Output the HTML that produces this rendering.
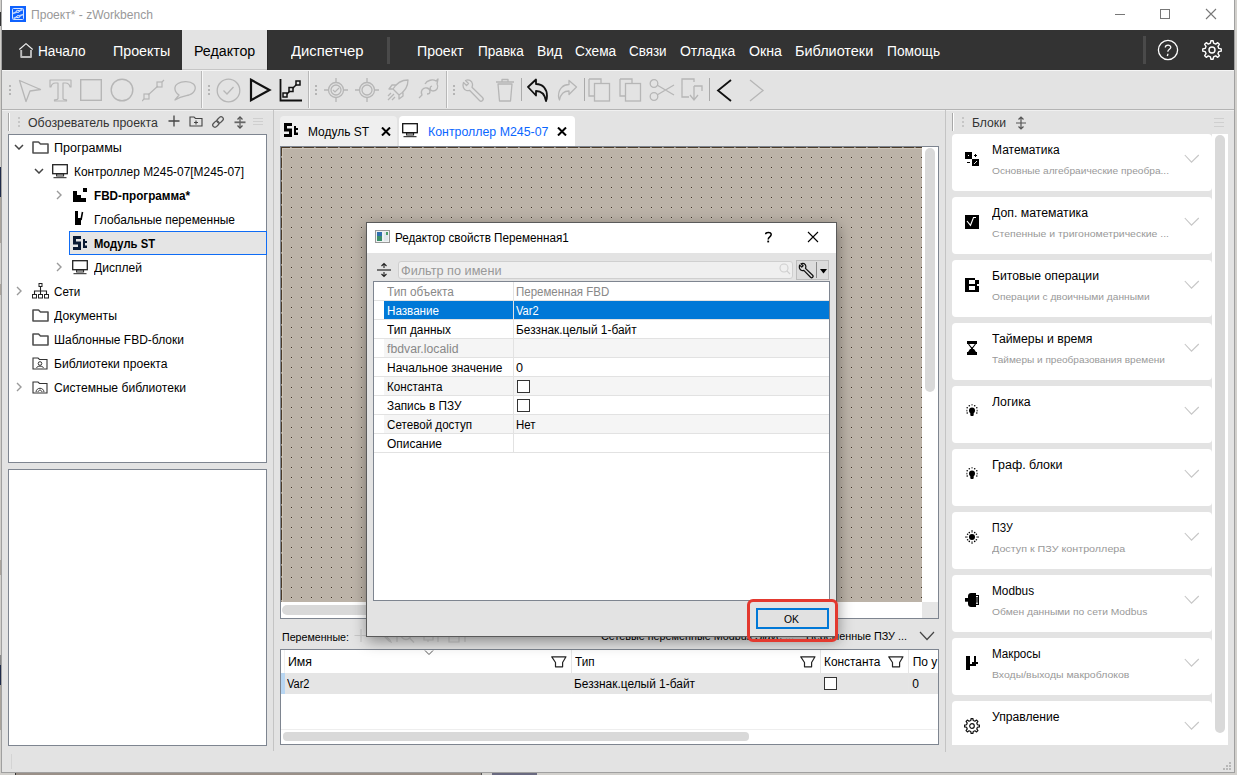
<!DOCTYPE html><html><head><meta charset="utf-8"><style>
html,body{margin:0;padding:0;width:1237px;height:775px;overflow:hidden;background:#b9b2a8}
body{position:relative;font-family:"Liberation Sans",sans-serif}
body div{position:absolute;box-sizing:border-box}
.t{white-space:nowrap}
</style></head><body>
<div style="left:0px;top:0px;width:1237px;height:775px;background:#d2d0cc"></div>
<div style="left:16px;top:773px;width:465px;height:2px;background:#9a9088"></div>
<div style="left:481px;top:773px;width:1px;height:2px;background:#555"></div>
<div style="left:492px;top:773px;width:45px;height:2px;background:#6a6a80"></div>
<div style="left:15px;top:773px;width:1px;height:2px;background:#333"></div>
<div style="left:0px;top:12px;width:1px;height:14px;background:#333"></div>
<div style="left:0px;top:167px;width:1px;height:30px;background:#1f2b4a"></div>
<div style="left:0px;top:197px;width:1px;height:46px;background:#aaa49c"></div>
<div style="left:0px;top:284px;width:1px;height:11px;background:#aaa49c"></div>
<div style="left:0px;top:560px;width:1px;height:15px;background:#aaa49c"></div>
<div style="left:0px;top:655px;width:1px;height:10px;background:#888"></div>
<div style="left:0px;top:665px;width:1px;height:20px;background:#1f2b4a"></div>
<div style="left:0px;top:685px;width:1px;height:45px;background:#aaa49c"></div>
<div style="left:1px;top:0px;width:1234px;height:773px;background:#a0a0a0"></div>
<div style="left:2px;top:0px;width:1232px;height:772px;background:#e3e3e3"></div>
<div style="left:2px;top:0px;width:1232px;height:30px;background:#fff"></div>
<svg style="position:absolute;left:10px;top:6px;" width="16" height="16" viewBox="0 0 16 16"><rect width="16" height="16" fill="#0f62fe"/><rect x="2.5" y="2.5" width="11" height="11" rx="1" fill="none" stroke="#d8e6ff" stroke-width="1"/><path d="M3 7.6 L12.6 3.4 M3.4 12.6 L13 8.4" stroke="#bcd4ff" stroke-width="1.6"/><ellipse cx="7.8" cy="5.3" rx="1.6" ry="1" fill="#0f62fe" stroke="#e8f0ff" stroke-width="1"/><ellipse cx="8.2" cy="10.7" rx="1.6" ry="1" fill="#0f62fe" stroke="#e8f0ff" stroke-width="1"/></svg>
<div class="t" style="left:31.16px;top:8.84px;font-size:12px;line-height:12px;color:#999999;font-weight:400;transform:scaleX(1.0054);transform-origin:0 0;">Проект* - zWorkbench</div>
<div style="left:1115px;top:14px;width:10px;height:1px;background:#777"></div>
<div style="left:1160px;top:9px;width:10px;height:10px;border:1px solid #777"></div>
<svg style="position:absolute;left:1205px;top:8px;" width="12" height="12" viewBox="0 0 12 12"><path d="M1 1 L11 11 M11 1 L1 11" stroke="#777" stroke-width="1.1"/></svg>
<div style="left:2px;top:30px;width:1232px;height:40px;background:#333333"></div>
<div style="left:182px;top:30px;width:85px;height:40px;background:#e3e3e3"></div>
<div style="left:182px;top:69px;width:85px;height:1px;background:#c6c6c6"></div>
<div style="left:267px;top:30px;width:1px;height:40px;background:#282828"></div>
<div style="left:2px;top:70px;width:1232px;height:1px;background:#f5f5f5"></div>
<svg style="position:absolute;left:18px;top:42px;" width="16" height="16" viewBox="0 0 16 16"><path d="M3.2 8 V15 H13 V8" fill="none" stroke="#bdbdbd" stroke-width="1.9" stroke-linejoin="round"/><path d="M1.6 7.2 L8 1.6 L14.4 7.2" fill="none" stroke="#eeeeee" stroke-width="1.2" stroke-linejoin="round" stroke-linecap="round"/></svg>
<div class="t" style="left:38.22px;top:44.35px;font-size:14px;line-height:14px;color:#ffffff;font-weight:400;transform:scaleX(0.9758);transform-origin:0 0;">Начало</div>
<div class="t" style="left:113.22px;top:44.35px;font-size:14px;line-height:14px;color:#ffffff;font-weight:400;transform:scaleX(1.0180);transform-origin:0 0;">Проекты</div>
<div class="t" style="left:290.52px;top:44.35px;font-size:14px;line-height:14px;color:#ffffff;font-weight:400;transform:scaleX(1.0586);transform-origin:0 0;">Диспетчер</div>
<div class="t" style="left:417.42px;top:44.35px;font-size:14px;line-height:14px;color:#ffffff;font-weight:400;transform:scaleX(1.0081);transform-origin:0 0;">Проект</div>
<div class="t" style="left:477.82px;top:44.35px;font-size:14px;line-height:14px;color:#ffffff;font-weight:400;transform:scaleX(0.9705);transform-origin:0 0;">Правка</div>
<div class="t" style="left:536.82px;top:44.35px;font-size:14px;line-height:14px;color:#ffffff;font-weight:400;transform:scaleX(0.9949);transform-origin:0 0;">Вид</div>
<div class="t" style="left:574.82px;top:44.35px;font-size:14px;line-height:14px;color:#ffffff;font-weight:400;transform:scaleX(0.9773);transform-origin:0 0;">Схема</div>
<div class="t" style="left:628.82px;top:44.35px;font-size:14px;line-height:14px;color:#ffffff;font-weight:400;transform:scaleX(0.9587);transform-origin:0 0;">Связи</div>
<div class="t" style="left:679.82px;top:44.35px;font-size:14px;line-height:14px;color:#ffffff;font-weight:400;transform:scaleX(0.9974);transform-origin:0 0;">Отладка</div>
<div class="t" style="left:748.82px;top:44.35px;font-size:14px;line-height:14px;color:#ffffff;font-weight:400;transform:scaleX(1.0139);transform-origin:0 0;">Окна</div>
<div class="t" style="left:794.82px;top:44.35px;font-size:14px;line-height:14px;color:#ffffff;font-weight:400;transform:scaleX(1.0309);transform-origin:0 0;">Библиотеки</div>
<div class="t" style="left:886.82px;top:44.35px;font-size:14px;line-height:14px;color:#ffffff;font-weight:400;transform:scaleX(0.9819);transform-origin:0 0;">Помощь</div>
<div class="t" style="left:194.22px;top:44.35px;font-size:14px;line-height:14px;color:#000000;font-weight:400;transform:scaleX(1.0155);transform-origin:0 0;">Редактор</div>
<div style="left:387px;top:37px;width:3px;height:27px;background:#4a4a4a"></div>
<div style="left:1143px;top:36px;width:3px;height:28px;background:#4a4a4a"></div>
<svg style="position:absolute;left:1157px;top:39px;" width="22" height="22" viewBox="0 0 22 22"><circle cx="11" cy="11" r="9.6" fill="none" stroke="#fff" stroke-width="1.3"/><path d="M8.3 8.5 C8.3 5.5 13.8 5.5 13.8 8.3 C13.8 10.3 10.8 10.3 10.8 12.8" fill="none" stroke="#fff" stroke-width="1.3"/><path d="M10.8 14.8 L10.8 15.8 L10.2 17" stroke="#fff" stroke-width="1.3"/></svg>
<svg style="position:absolute;left:1200px;top:38px;" width="24" height="24" viewBox="0 0 24 24"><path d="M18.82 10.42 L21.23 10.86 L21.23 13.14 L18.82 13.58 L17.94 15.70 L19.33 17.72 L17.72 19.33 L15.70 17.94 L13.58 18.82 L13.14 21.23 L10.86 21.23 L10.42 18.82 L8.30 17.94 L6.28 19.33 L4.67 17.72 L6.06 15.70 L5.18 13.58 L2.77 13.14 L2.77 10.86 L5.18 10.42 L6.06 8.30 L4.67 6.28 L6.28 4.67 L8.30 6.06 L10.42 5.18 L10.86 2.77 L13.14 2.77 L13.58 5.18 L15.70 6.06 L17.72 4.67 L19.33 6.28 L17.94 8.30Z" fill="none" stroke="#fff" stroke-width="1.4" stroke-linejoin="round"/><circle cx="12" cy="12" r="3.0" fill="none" stroke="#fff" stroke-width="1.4"/></svg>
<div style="left:2px;top:71px;width:1232px;height:38px;background:#e3e3e3"></div>
<div style="left:2px;top:109px;width:1232px;height:1px;background:#b4b4b4"></div>
<div style="left:2px;top:110px;width:1232px;height:1px;background:#f0f0f0"></div>
<div style="left:201px;top:71px;width:1px;height:37px;background:#b8b8b8"></div>
<div style="left:202px;top:71px;width:1px;height:37px;background:#f7f7f7"></div>
<div style="left:308px;top:71px;width:1px;height:37px;background:#b8b8b8"></div>
<div style="left:309px;top:71px;width:1px;height:37px;background:#f7f7f7"></div>
<div style="left:446px;top:71px;width:1px;height:37px;background:#b8b8b8"></div>
<div style="left:447px;top:71px;width:1px;height:37px;background:#f7f7f7"></div>
<div style="left:9px;top:85px;width:2px;height:2px;background:#b5b5b5"></div>
<div style="left:9px;top:89px;width:2px;height:2px;background:#b5b5b5"></div>
<div style="left:9px;top:93px;width:2px;height:2px;background:#b5b5b5"></div>
<div style="left:208px;top:85px;width:2px;height:2px;background:#b5b5b5"></div>
<div style="left:208px;top:89px;width:2px;height:2px;background:#b5b5b5"></div>
<div style="left:208px;top:93px;width:2px;height:2px;background:#b5b5b5"></div>
<div style="left:315px;top:85px;width:2px;height:2px;background:#b5b5b5"></div>
<div style="left:315px;top:89px;width:2px;height:2px;background:#b5b5b5"></div>
<div style="left:315px;top:93px;width:2px;height:2px;background:#b5b5b5"></div>
<div style="left:453px;top:85px;width:2px;height:2px;background:#b5b5b5"></div>
<div style="left:453px;top:89px;width:2px;height:2px;background:#b5b5b5"></div>
<div style="left:453px;top:93px;width:2px;height:2px;background:#b5b5b5"></div>
<svg style="position:absolute;left:18px;top:79px;" width="24" height="24" viewBox="0 0 24 24"><path d="M1.5 1.5 L22.5 10.5 L12 12 L8 22.5 Z" fill="none" stroke="#b6b6b6" stroke-width="1.3" stroke-linejoin="round"/></svg>
<svg style="position:absolute;left:49px;top:79px;" width="23" height="23" viewBox="0 0 23 23"><path d="M1 1 H22 V8 H21 C20.5 5 19 4 16.5 4 H14 V19.5 C14 20.3 14.8 20.8 17.5 20.8 V22 H5.5 V20.8 C8.2 20.8 9 20.3 9 19.5 V4 H6.5 C4 4 2.5 5 2 8 H1 Z" fill="none" stroke="#b6b6b6" stroke-width="1.2" stroke-linejoin="round"/></svg>
<svg style="position:absolute;left:80px;top:79px;" width="23" height="23" viewBox="0 0 23 23"><rect x="0.7" y="0.7" width="20.6" height="20.6" fill="none" stroke="#b6b6b6" stroke-width="1.4"/></svg>
<svg style="position:absolute;left:110px;top:78px;" width="24" height="24" viewBox="0 0 24 24"><circle cx="12" cy="12" r="10.8" fill="none" stroke="#b6b6b6" stroke-width="1.4"/></svg>
<svg style="position:absolute;left:142px;top:79px;" width="23" height="23" viewBox="0 0 23 23"><rect x="2" y="15" width="5" height="5" fill="none" stroke="#b6b6b6" stroke-width="1.2"/><rect x="15" y="3" width="5" height="5" fill="none" stroke="#b6b6b6" stroke-width="1.2"/><path d="M6 16 L16 7 M0 22 L2 20 M20 3 L22 1" stroke="#b6b6b6" stroke-width="1.2"/></svg>
<svg style="position:absolute;left:172px;top:80px;" width="25" height="21" viewBox="0 0 25 21"><path d="M3 20 L7 15 C2 12 1.5 6 6 3.5 C10 1 18 1 21.5 4 C25 7.5 23 13 17 15 C13 16 9 16 3 20 Z" fill="none" stroke="#b6b6b6" stroke-width="1.3" stroke-linejoin="round"/></svg>
<svg style="position:absolute;left:216px;top:78px;" width="25" height="25" viewBox="0 0 25 25"><circle cx="12.5" cy="12.5" r="11.3" fill="none" stroke="#b6b6b6" stroke-width="1.3"/><path d="M7.5 12.5 L11 16 L17.5 9" fill="none" stroke="#b6b6b6" stroke-width="1.3"/></svg>
<svg style="position:absolute;left:249px;top:78px;" width="23" height="24" viewBox="0 0 23 24"><path d="M2 1.8 L20.5 12 L2 22.2 Z" fill="none" stroke="#111" stroke-width="2.2" stroke-linejoin="miter"/></svg>
<svg style="position:absolute;left:279px;top:79px;" width="24" height="23" viewBox="0 0 24 23"><path d="M1.5 0 V21.5 H23" fill="none" stroke="#111" stroke-width="1.8"/><path d="M6 17 L18 5" stroke="#111" stroke-width="1.5"/><rect x="4" y="14" width="4" height="4" fill="#e3e3e3" stroke="#111" stroke-width="1.5"/><rect x="10" y="8.5" width="4" height="4" fill="#e3e3e3" stroke="#111" stroke-width="1.5"/><rect x="17" y="2" width="4" height="4" fill="#e3e3e3" stroke="#111" stroke-width="1.5"/></svg>
<svg style="position:absolute;left:324px;top:78px;" width="24" height="24" viewBox="0 0 24 24"><circle cx="12" cy="12" r="7.5" fill="none" stroke="#b6b6b6" stroke-width="1.3"/><circle cx="12" cy="12" r="5" fill="none" stroke="#b6b6b6" stroke-width="1.3"/><path d="M12 0 V4 M12 20 V24 M0 12 H4 M20 12 H24" stroke="#b6b6b6" stroke-width="1.3"/><path d="M9 12 L11 14 L15 10" fill="none" stroke="#b6b6b6" stroke-width="1.2"/></svg>
<svg style="position:absolute;left:355px;top:78px;" width="24" height="24" viewBox="0 0 24 24"><circle cx="12" cy="12" r="7.5" fill="none" stroke="#b6b6b6" stroke-width="1.3"/><circle cx="12" cy="12" r="5" fill="none" stroke="#b6b6b6" stroke-width="1.3"/><path d="M12 0 V4 M12 20 V24 M0 12 H4 M20 12 H24" stroke="#b6b6b6" stroke-width="1.3"/></svg>
<svg style="position:absolute;left:386px;top:78px;" width="24" height="24" viewBox="0 0 24 24"><path d="M22 2 C15 2 10 6 7 11 L13 17 C18 14 22 9 22 2 Z M7 11 L3 11 L6 7 L11 7 M13 17 L13 21 L17 18 L17 13 M8 16 L2 22 M5 15 L2 18 M9 19 L6 22" fill="none" stroke="#b6b6b6" stroke-width="1.3" stroke-linejoin="round"/></svg>
<svg style="position:absolute;left:417px;top:78px;" width="23" height="24" viewBox="0 0 23 24"><path d="M2 20 L5 17 C3 13 6 9 10 10 C14 11 14 16 10 16 M8 6 C10 2 16 1 19 3 L21 1 L20 6 C22 9 20 13 16 13 C13 13 12 9 15 8" fill="none" stroke="#b6b6b6" stroke-width="1.3" stroke-linejoin="round"/></svg>
<svg style="position:absolute;left:461px;top:78px;" width="25" height="25" viewBox="0 0 25 25"><path d="M2.5 4.5 L5.5 7.5 L7.5 5.5 L4.5 2.5 C7.5 1 11 2.5 11.5 6 C11.7 7.5 11.3 8.5 11 9.3 L21.5 19.5 C22.5 20.5 22.5 21.5 21.5 22.5 C20.5 23.5 19.5 23.5 18.5 22.5 L8.5 12.3 C7.5 12.7 6.5 12.8 5.5 12.5 C2.5 11.5 1.2 8 2.5 4.5 Z" fill="none" stroke="#b6b6b6" stroke-width="1.3" stroke-linejoin="round"/></svg>
<svg style="position:absolute;left:495px;top:78px;" width="20" height="24" viewBox="0 0 20 24"><path d="M1 4 H19 M7 4 V1.5 H13 V4 M3 6 L4.5 23 H15.5 L17 6 Z" fill="none" stroke="#b6b6b6" stroke-width="1.3" stroke-linejoin="round"/></svg>
<div style="left:521px;top:78px;width:1px;height:23px;background:#aaa"></div>
<svg style="position:absolute;left:526px;top:78px;" width="23" height="24" viewBox="0 0 23 24"><path d="M2 9 L10 1.5 L10 6 C17 6 21 11 21 18 C21 20 20.5 22 20 23 C19 17 16 13 10 13 L10 17.5 Z" fill="none" stroke="#111" stroke-width="1.8" stroke-linejoin="round"/></svg>
<svg style="position:absolute;left:557px;top:79px;" width="21" height="22" viewBox="0 0 21 22"><path d="M19.5 8 L12 1.5 L12 5.5 C6 5.5 1.5 10 1.5 17 C1.5 18.5 2 20 2.5 21 C3.5 15.5 6.5 12 12 12 L12 15.5 Z" fill="none" stroke="#b6b6b6" stroke-width="1.3" stroke-linejoin="round"/></svg>
<div style="left:584px;top:78px;width:1px;height:23px;background:#aaa"></div>
<svg style="position:absolute;left:588px;top:78px;" width="23" height="24" viewBox="0 0 23 24"><path d="M1 1 H13 V5 M1 1 V18 H6" fill="none" stroke="#b6b6b6" stroke-width="1.3"/><rect x="6.5" y="5.5" width="15" height="17.5" fill="none" stroke="#b6b6b6" stroke-width="1.3"/></svg>
<svg style="position:absolute;left:619px;top:78px;" width="23" height="24" viewBox="0 0 23 24"><path d="M1 1 H13 V5 M1 1 V18 H6" fill="none" stroke="#b6b6b6" stroke-width="1.3"/><rect x="6.5" y="5.5" width="15" height="17.5" fill="none" stroke="#b6b6b6" stroke-width="1.3"/></svg>
<svg style="position:absolute;left:649px;top:78px;" width="26" height="24" viewBox="0 0 26 24"><circle cx="5" cy="5.5" r="3.8" fill="none" stroke="#b6b6b6" stroke-width="1.3"/><circle cx="5" cy="18.5" r="3.8" fill="none" stroke="#b6b6b6" stroke-width="1.3"/><path d="M8 7 L25 17 M8 17 L25 7" stroke="#b6b6b6" stroke-width="1.3"/></svg>
<svg style="position:absolute;left:681px;top:78px;" width="23" height="25" viewBox="0 0 23 25"><path d="M13 4 V1 H1 V19 H8 M13 8 V21 M9 17 L13 22 L17 17 M13 8 H21 V13" fill="none" stroke="#b6b6b6" stroke-width="1.3"/></svg>
<div style="left:709px;top:78px;width:1px;height:23px;background:#aaa"></div>
<svg style="position:absolute;left:716px;top:79px;" width="17" height="23" viewBox="0 0 17 23"><path d="M15 1 L2 11.5 L15 22" fill="none" stroke="#111" stroke-width="1.8"/></svg>
<svg style="position:absolute;left:748px;top:79px;" width="17" height="23" viewBox="0 0 17 23"><path d="M2 1 L15 11.5 L2 22" fill="none" stroke="#b6b6b6" stroke-width="1.3"/></svg>
<div style="left:8px;top:113px;width:1px;height:18px;background:#a8a8a8"></div>
<div style="left:8px;top:113px;width:2px;height:1px;background:#a8a8a8"></div>
<div style="left:9px;top:113px;width:1px;height:18px;background:#fff"></div>
<div style="left:18px;top:117px;width:2px;height:2px;background:#c6c6c6"></div>
<div style="left:18px;top:121px;width:2px;height:2px;background:#c6c6c6"></div>
<div style="left:18px;top:125px;width:2px;height:2px;background:#c6c6c6"></div>
<div class="t" style="left:28.46px;top:117.34px;font-size:12px;line-height:12px;color:#333333;font-weight:400;transform:scaleX(1.0283);transform-origin:0 0;">Обозреватель проекта</div>
<svg style="position:absolute;left:167px;top:114px;" width="14" height="14" viewBox="0 0 14 14"><path d="M7 1.5 V12.5 M1.5 7 H12.5" stroke="#444" stroke-width="1.3"/></svg>
<svg style="position:absolute;left:189px;top:115px;" width="14" height="12" viewBox="0 0 14 12"><path d="M1 2 H5 L6.5 3.5 H13 V11 H1 Z" fill="none" stroke="#444" stroke-width="1.1"/><path d="M7 5.5 V9.5 M5 7.5 H9" stroke="#444" stroke-width="1.1"/></svg>
<svg style="position:absolute;left:211px;top:115px;" width="14" height="14" viewBox="0 0 14 14"><g transform="rotate(-45 7 7)"><rect x="0.5" y="4.8" width="7" height="4.4" rx="2.2" fill="none" stroke="#555" stroke-width="1.3"/><rect x="6.5" y="4.8" width="7" height="4.4" rx="2.2" fill="none" stroke="#555" stroke-width="1.3"/></g></svg>
<svg style="position:absolute;left:234px;top:116px;" width="12" height="13" viewBox="0 0 12 13"><path d="M6 1 V12" stroke="#555" stroke-width="1.2"/><path d="M0.5 6.3 H11.5" stroke="#666" stroke-width="1.8"/><path d="M3.5 3.5 L6 1 L8.5 3.5 M3.5 9.5 L6 12 L8.5 9.5" fill="none" stroke="#555" stroke-width="1.3"/></svg>
<div style="left:253px;top:118px;width:10px;height:1px;background:#cfcfcf"></div>
<div style="left:253px;top:121px;width:10px;height:1px;background:#cfcfcf"></div>
<div style="left:253px;top:124px;width:10px;height:1px;background:#cfcfcf"></div>
<div style="left:8px;top:134px;width:259px;height:329px;background:#fff;border:1px solid #7e8590"></div>
<div style="left:8px;top:469px;width:259px;height:277px;background:#fff;border:1px solid #7e8590"></div>
<div style="left:273px;top:110px;width:1px;height:641px;background:#c4c4c4"></div>
<div style="left:945px;top:110px;width:1px;height:642px;background:#c4c4c4"></div>
<div style="left:11px;top:754px;width:1px;height:15px;background:#d4d4d4"></div>
<svg style="position:absolute;left:14px;top:144px;" width="10" height="6" viewBox="0 0 10 6"><path d="M1 1 L5 5 L9 1" fill="none" stroke="#444" stroke-width="1.5"/></svg>
<svg style="position:absolute;left:32px;top:141px;" width="17" height="13" viewBox="0 0 17 13"><path d="M1 1 H6.5 L8.5 3 H16 V12 H1 Z" fill="none" stroke="#505050" stroke-width="1.6" stroke-linejoin="round"/></svg>
<div class="t" style="left:53.66px;top:142.14px;font-size:12px;line-height:12px;color:#000;font-weight:400;transform:scaleX(1.0458);transform-origin:0 0;">Программы</div>
<svg style="position:absolute;left:34px;top:168px;" width="10" height="6" viewBox="0 0 10 6"><path d="M1 1 L5 5 L9 1" fill="none" stroke="#444" stroke-width="1.5"/></svg>
<svg style="position:absolute;left:52px;top:164px;" width="17" height="15" viewBox="0 0 17 15"><rect x="0.7" y="0.7" width="14.6" height="9" fill="none" stroke="#222" stroke-width="1.3"/><rect x="4.6" y="10" width="7" height="2" fill="none" stroke="#222" stroke-width="1"/><path d="M1.5 13.7 H14.5" stroke="#222" stroke-width="1"/></svg>
<div class="t" style="left:73.56px;top:166.14px;font-size:12px;line-height:12px;color:#000;font-weight:400;transform:scaleX(0.9944);transform-origin:0 0;">Контроллер М245-07[М245-07]</div>
<svg style="position:absolute;left:56px;top:190px;" width="6" height="10" viewBox="0 0 6 10"><path d="M1 1 L5 5 L1 9" fill="none" stroke="#9a9a9a" stroke-width="1.4"/></svg>
<svg style="position:absolute;left:73px;top:188px;" width="14" height="14" viewBox="0 0 14 14"><path d="M0 3 H4 V7 H8 V10 H13 V14 H0 Z" fill="#000"/><rect x="10" y="0" width="4" height="4" fill="#000"/></svg>
<div class="t" style="left:93.66px;top:190.14px;font-size:12px;line-height:12px;color:#000;font-weight:700;transform:scaleX(0.9745);transform-origin:0 0;">FBD-программа*</div>
<svg style="position:absolute;left:74px;top:211px;" width="13" height="15" viewBox="0 0 13 15"><path d="M1 0 H4 V7 H7 V14 H1 Z" fill="#000"/><path d="M8.5 1 L7 9" stroke="#000" stroke-width="1.6"/></svg>
<div class="t" style="left:93.66px;top:214.14px;font-size:12px;line-height:12px;color:#000;font-weight:400;transform:scaleX(0.9970);transform-origin:0 0;">Глобальные переменные</div>
<div style="left:69px;top:231px;width:198px;height:24px;background:#e5e5e5;border:1px solid #0f6cf5"></div>
<svg style="position:absolute;left:73px;top:236px;" width="15" height="14" viewBox="0 0 15 14"><path d="M0 0 H8 V3 H3 V5.5 H8 V14 H0 V11 H5 V8.5 H0 Z" fill="#0a1a33"/><path d="M10 3 H12 V5 H14 V7 H12 V9.5 H14 V12 H10 Z" fill="#0a1a33"/></svg>
<div class="t" style="left:93.66px;top:238.14px;font-size:12px;line-height:12px;color:#000;font-weight:700;transform:scaleX(0.9367);transform-origin:0 0;">Модуль ST</div>
<svg style="position:absolute;left:56px;top:262px;" width="6" height="10" viewBox="0 0 6 10"><path d="M1 1 L5 5 L1 9" fill="none" stroke="#9a9a9a" stroke-width="1.4"/></svg>
<svg style="position:absolute;left:72px;top:260px;" width="17" height="15" viewBox="0 0 17 15"><rect x="0.7" y="0.7" width="14.6" height="9" fill="none" stroke="#222" stroke-width="1.3"/><rect x="4.6" y="10" width="7" height="2" fill="none" stroke="#222" stroke-width="1"/><path d="M1.5 13.7 H14.5" stroke="#222" stroke-width="1"/></svg>
<div class="t" style="left:93.66px;top:262.14px;font-size:12px;line-height:12px;color:#000;font-weight:400;transform:scaleX(1.0059);transform-origin:0 0;">Дисплей</div>
<svg style="position:absolute;left:16px;top:286px;" width="6" height="10" viewBox="0 0 6 10"><path d="M1 1 L5 5 L1 9" fill="none" stroke="#9a9a9a" stroke-width="1.4"/></svg>
<svg style="position:absolute;left:32px;top:283px;" width="17" height="16" viewBox="0 0 17 16"><path d="M8.5 3 V8 M2.5 11 V8 H14.5 V11 M8.5 8 V11" fill="none" stroke="#222" stroke-width="1.1"/><rect x="7" y="0.5" width="3" height="3" fill="none" stroke="#222" stroke-width="1"/><rect x="0.5" y="11.5" width="4" height="3.5" fill="none" stroke="#222" stroke-width="1"/><rect x="6.5" y="11.5" width="4" height="3.5" fill="none" stroke="#222" stroke-width="1"/><rect x="12.5" y="11.5" width="4" height="3.5" fill="none" stroke="#222" stroke-width="1"/></svg>
<div class="t" style="left:53.66px;top:286.14px;font-size:12px;line-height:12px;color:#000;font-weight:400;transform:scaleX(0.9690);transform-origin:0 0;">Сети</div>
<svg style="position:absolute;left:32px;top:309px;" width="17" height="13" viewBox="0 0 17 13"><path d="M1 1 H6.5 L8.5 3 H16 V12 H1 Z" fill="none" stroke="#505050" stroke-width="1.6" stroke-linejoin="round"/></svg>
<div class="t" style="left:53.66px;top:310.14px;font-size:12px;line-height:12px;color:#000;font-weight:400;transform:scaleX(1.0184);transform-origin:0 0;">Документы</div>
<svg style="position:absolute;left:32px;top:333px;" width="17" height="13" viewBox="0 0 17 13"><path d="M1 1 H6.5 L8.5 3 H16 V12 H1 Z" fill="none" stroke="#505050" stroke-width="1.6" stroke-linejoin="round"/></svg>
<div class="t" style="left:53.66px;top:334.14px;font-size:12px;line-height:12px;color:#000;font-weight:400;transform:scaleX(1.0016);transform-origin:0 0;">Шаблонные FBD-блоки</div>
<svg style="position:absolute;left:32px;top:357px;" width="16" height="13" viewBox="0 0 16 13"><path d="M1 1 H6 L7.5 2.5 H15 V12 H1 Z" fill="none" stroke="#333" stroke-width="1.1"/><circle cx="8" cy="6.5" r="1.8" fill="none" stroke="#333" stroke-width="1"/><path d="M4.5 11 C5 8.5 11 8.5 11.5 11" fill="none" stroke="#333" stroke-width="1"/></svg>
<div class="t" style="left:53.66px;top:358.14px;font-size:12px;line-height:12px;color:#000;font-weight:400;transform:scaleX(1.0107);transform-origin:0 0;">Библиотеки проекта</div>
<svg style="position:absolute;left:16px;top:382px;" width="6" height="10" viewBox="0 0 6 10"><path d="M1 1 L5 5 L1 9" fill="none" stroke="#9a9a9a" stroke-width="1.4"/></svg>
<svg style="position:absolute;left:32px;top:381px;" width="16" height="13" viewBox="0 0 16 13"><path d="M1 1 H6 L7.5 2.5 H15 V12 H1 Z" fill="none" stroke="#333" stroke-width="1.1"/><path d="M4 11 C4.5 6 11.5 6 12 11 M6 11 C6.5 8.5 9.5 8.5 10 11" fill="none" stroke="#333" stroke-width="1"/></svg>
<div class="t" style="left:53.66px;top:382.14px;font-size:12px;line-height:12px;color:#000;font-weight:400;transform:scaleX(1.0081);transform-origin:0 0;">Системные библиотеки</div>
<div style="left:280px;top:116px;width:117px;height:30px;background:#efefef;border-radius:4px 4px 0 0"></div>
<div style="left:399px;top:116px;width:176px;height:30px;background:#ffffff;border-radius:4px 4px 0 0"></div>
<svg style="position:absolute;left:284px;top:123px;" width="15" height="14" viewBox="0 0 15 14"><path d="M0 0 H8 V3 H3 V5.5 H8 V14 H0 V11 H5 V8.5 H0 Z" fill="#000"/><path d="M10 3 H12 V5 H14 V7 H12 V9.5 H14 V12 H10 Z" fill="#000"/></svg>
<div class="t" style="left:308.46px;top:125.84px;font-size:12px;line-height:12px;color:#000;font-weight:400;transform:scaleX(0.9967);transform-origin:0 0;">Модуль ST</div>
<svg style="position:absolute;left:381px;top:127px;" width="10" height="9" viewBox="0 0 10 9"><path d="M1 0.5 L9 8.5 M9 0.5 L1 8.5" stroke="#000" stroke-width="2"/></svg>
<svg style="position:absolute;left:402px;top:123px;" width="17" height="15" viewBox="0 0 17 15"><rect x="0.7" y="0.7" width="14.6" height="9" fill="none" stroke="#111" stroke-width="1.3"/><rect x="4.6" y="10" width="7" height="2" fill="none" stroke="#111" stroke-width="1"/><path d="M1.5 13.7 H14.5" stroke="#111" stroke-width="1"/></svg>
<div class="t" style="left:428.16px;top:125.84px;font-size:12px;line-height:12px;color:#0a66ff;font-weight:400;transform:scaleX(1.0306);transform-origin:0 0;">Контроллер М245-07</div>
<svg style="position:absolute;left:557px;top:127px;" width="10" height="9" viewBox="0 0 10 9"><path d="M1 0.5 L9 8.5 M9 0.5 L1 8.5" stroke="#000" stroke-width="2"/></svg>
<div style="left:280px;top:146px;width:659px;height:473px;background:#fff;border:1px solid #7e8590"></div>
<div style="left:281px;top:147px;width:641px;height:455px;background:#bcb3a8"></div>
<svg style="position:absolute;left:281px;top:147px;" width="641" height="455" viewBox="0 0 641 455"><defs><pattern id="dp" x="0" y="0" width="10" height="10" patternUnits="userSpaceOnUse"><rect x="0" y="0" width="1" height="1" fill="#3d3020"/><rect x="-1" y="0" width="1" height="1" fill="#cdc5ba" opacity="0.5"/><rect x="1" y="0" width="1" height="1" fill="#cdc5ba" opacity="0.5"/><rect x="0" y="-1" width="1" height="1" fill="#cdc5ba" opacity="0.5"/><rect x="0" y="1" width="1" height="1" fill="#cdc5ba" opacity="0.5"/></pattern></defs><rect x="10" y="10" width="641" height="455" fill="url(#dp)" transform="translate(0,0)"/><rect x="1" y="1" width="640" height="1" fill="#cec6ba"/><rect x="1" y="1" width="1" height="454" fill="#cec6ba"/><path d="M0 0.5 H641" stroke="#4a3a28" stroke-width="1" stroke-dasharray="10.6 1.4" stroke-dashoffset="1.4"/><path d="M0.5 0 V455" stroke="#4a3a28" stroke-width="1" stroke-dasharray="10.6 1.4" stroke-dashoffset="1.4"/></svg>
<div style="left:925px;top:148px;width:10px;height:244px;background:#d9d9d9;border-radius:5px"></div>
<div style="left:282px;top:605px;width:420px;height:10px;background:#d9d9d9;border-radius:5px"></div>
<div style="left:922px;top:602px;width:16px;height:16px;background:#e6e6e6"></div>
<div class="t" style="left:281.73px;top:631.69px;font-size:11px;line-height:11px;color:#000;font-weight:400;transform:scaleX(0.9686);transform-origin:0 0;">Переменные:</div>
<svg style="position:absolute;left:354px;top:628px;" width="14" height="15" viewBox="0 0 14 15"><path d="M7 1 V14 M0.5 7.5 H13.5" stroke="#c8c8c8" stroke-width="1.2"/></svg>
<svg style="position:absolute;left:377px;top:628px;" width="15" height="15" viewBox="0 0 15 15"><path d="M2 3 L12 13 L14 14 L13 12 L3 2 Z M1 1 L3 3" fill="none" stroke="#c8c8c8" stroke-width="1.2"/></svg>
<svg style="position:absolute;left:396px;top:628px;" width="21" height="15" viewBox="0 0 21 15"><path d="M1 1 V14" stroke="#c8c8c8" stroke-width="1.2"/><circle cx="10" cy="6.5" r="5" fill="none" stroke="#c8c8c8" stroke-width="1.3"/><path d="M13.5 10 L18 14.5" stroke="#c8c8c8" stroke-width="1.3"/></svg>
<svg style="position:absolute;left:423px;top:628px;" width="22" height="15" viewBox="0 0 22 15"><path d="M1 3 H10 V12 H1 Z M5 12 V14 M10 7 H20 M15 3 V14" fill="none" stroke="#c8c8c8" stroke-width="1.2"/></svg>
<svg style="position:absolute;left:448px;top:628px;" width="22" height="15" viewBox="0 0 22 15"><path d="M1 3 H11 V14 H1 Z M17 1 V14 M13 1 H21" fill="none" stroke="#c8c8c8" stroke-width="1.2"/></svg>
<div class="t" style="left:600.93px;top:631.19px;font-size:11px;line-height:11px;color:#000;font-weight:400;transform:scaleX(0.9806);transform-origin:0 0;">Сетевые переменные Modbus Slave ...</div>
<div class="t" style="left:806.23px;top:631.19px;font-size:11px;line-height:11px;color:#000;font-weight:400;transform:scaleX(0.9824);transform-origin:0 0;">Переменные ПЗУ ...</div>
<svg style="position:absolute;left:919px;top:631px;" width="16" height="10" viewBox="0 0 16 10"><path d="M1 1 L8 8.5 L15 1" fill="none" stroke="#444" stroke-width="1.2"/></svg>
<div style="left:280px;top:649px;width:659px;height:96px;background:#fff;border:1px solid #7e8590"></div>
<div style="left:281px;top:673px;width:657px;height:21px;background:#e5e5e5"></div>
<div style="left:281px;top:673px;width:4px;height:21px;background:#b8d6f2"></div>
<div style="left:284px;top:650px;width:1px;height:23px;background:#f0f0f0"></div>
<div style="left:281px;top:729px;width:657px;height:15px;background:#fff"></div>
<div style="left:281px;top:729px;width:657px;height:1px;background:#eeeeee"></div>
<div style="left:283px;top:732px;width:466px;height:9px;background:#d9d9d9;border-radius:4px"></div>
<div style="left:571px;top:650px;width:1px;height:44px;background:#e6e6e6"></div>
<div style="left:820px;top:650px;width:1px;height:44px;background:#e6e6e6"></div>
<div style="left:908px;top:650px;width:1px;height:44px;background:#e6e6e6"></div>
<div class="t" style="left:288.16px;top:655.84px;font-size:12px;line-height:12px;color:#000;font-weight:400;transform:scaleX(1.0267);transform-origin:0 0;">Имя</div>
<div class="t" style="left:287.16px;top:677.84px;font-size:12px;line-height:12px;color:#000;font-weight:400;transform:scaleX(0.9195);transform-origin:0 0;">Var2</div>
<div class="t" style="left:574.96px;top:655.84px;font-size:12px;line-height:12px;color:#000;font-weight:400;transform:scaleX(0.9742);transform-origin:0 0;">Тип</div>
<div class="t" style="left:573.96px;top:677.84px;font-size:12px;line-height:12px;color:#000;font-weight:400;transform:scaleX(0.9929);transform-origin:0 0;">Беззнак.целый 1-байт</div>
<div class="t" style="left:824.16px;top:655.84px;font-size:12px;line-height:12px;color:#000;font-weight:400;transform:scaleX(0.9912);transform-origin:0 0;">Константа</div>
<div class="t" style="left:912.66px;top:655.84px;font-size:12px;line-height:12px;color:#000;font-weight:400;">По у</div>
<div class="t" style="left:912.16px;top:677.84px;font-size:12px;line-height:12px;color:#000;font-weight:400;">0</div>
<div style="left:824px;top:677px;width:13px;height:13px;background:#fff;border:1px solid #333"></div>
<svg style="position:absolute;left:551px;top:656px;" width="16" height="12" viewBox="0 0 16 12"><path d="M0.8 0.8 H15 L11.6 6.5 V10.8 H4.5 V6.5 Z" fill="none" stroke="#222" stroke-width="1.2" stroke-linejoin="round"/></svg>
<svg style="position:absolute;left:800px;top:656px;" width="16" height="12" viewBox="0 0 16 12"><path d="M0.8 0.8 H15 L11.6 6.5 V10.8 H4.5 V6.5 Z" fill="none" stroke="#222" stroke-width="1.2" stroke-linejoin="round"/></svg>
<svg style="position:absolute;left:888px;top:656px;" width="16" height="12" viewBox="0 0 16 12"><path d="M0.8 0.8 H15 L11.6 6.5 V10.8 H4.5 V6.5 Z" fill="none" stroke="#222" stroke-width="1.2" stroke-linejoin="round"/></svg>
<svg style="position:absolute;left:424px;top:650px;" width="10" height="6" viewBox="0 0 10 6"><path d="M1 0.5 L5 4.5 L9 0.5" fill="none" stroke="#555" stroke-width="1"/></svg>
<div style="left:952px;top:113px;width:1px;height:18px;background:#a8a8a8"></div>
<div style="left:952px;top:113px;width:2px;height:1px;background:#a8a8a8"></div>
<div style="left:953px;top:113px;width:1px;height:18px;background:#fff"></div>
<div style="left:962px;top:117px;width:2px;height:2px;background:#c6c6c6"></div>
<div style="left:962px;top:121px;width:2px;height:2px;background:#c6c6c6"></div>
<div style="left:962px;top:125px;width:2px;height:2px;background:#c6c6c6"></div>
<div class="t" style="left:972.36px;top:117.34px;font-size:12px;line-height:12px;color:#333;font-weight:400;transform:scaleX(1.0145);transform-origin:0 0;">Блоки</div>
<svg style="position:absolute;left:1015px;top:116px;" width="12" height="14" viewBox="0 0 12 14"><path d="M6 1 V13 M1 7 H11 M3.5 3.5 L6 1 L8.5 3.5 M3.5 10.5 L6 13 L8.5 10.5" fill="none" stroke="#555" stroke-width="1.2"/></svg>
<div style="left:1214px;top:118px;width:10px;height:1px;background:#cfcfcf"></div>
<div style="left:1214px;top:122px;width:10px;height:1px;background:#cfcfcf"></div>
<div style="left:1214px;top:126px;width:10px;height:1px;background:#cfcfcf"></div>
<div style="left:1212px;top:134px;width:16px;height:611px;background:#ffffff"></div>
<div style="left:1215px;top:135px;width:10px;height:598px;background:#d9d9d9;border-radius:5px"></div>
<div style="left:952px;top:134px;width:260px;height:57px;background:#fff;border-radius:4px"></div>
<div class="t" style="left:991.56px;top:144.44px;font-size:12px;line-height:12px;color:#000;font-weight:400;transform:scaleX(0.9996);transform-origin:0 0;">Математика</div>
<div class="t" style="left:991.74px;top:165.96px;font-size:9.5px;line-height:9.5px;color:#999999;font-weight:400;transform:scaleX(1.0690);transform-origin:0 0;">Основные алгебраические преобра...</div>
<svg style="position:absolute;left:1184px;top:154px;" width="16" height="10" viewBox="0 0 16 10"><path d="M0.8 1 L7.5 8.2 L14.8 1" fill="none" stroke="#c6c6c6" stroke-width="1.1"/></svg>
<div style="left:952px;top:197px;width:260px;height:57px;background:#fff;border-radius:4px"></div>
<div class="t" style="left:991.56px;top:207.44px;font-size:12px;line-height:12px;color:#000;font-weight:400;transform:scaleX(1.0230);transform-origin:0 0;">Доп. математика</div>
<div class="t" style="left:991.74px;top:228.96px;font-size:9.5px;line-height:9.5px;color:#999999;font-weight:400;transform:scaleX(1.1011);transform-origin:0 0;">Степенные и тригонометрические ...</div>
<svg style="position:absolute;left:1184px;top:217px;" width="16" height="10" viewBox="0 0 16 10"><path d="M0.8 1 L7.5 8.2 L14.8 1" fill="none" stroke="#c6c6c6" stroke-width="1.1"/></svg>
<div style="left:952px;top:260px;width:260px;height:57px;background:#fff;border-radius:4px"></div>
<div class="t" style="left:991.56px;top:270.44px;font-size:12px;line-height:12px;color:#000;font-weight:400;transform:scaleX(1.0181);transform-origin:0 0;">Битовые операции</div>
<div class="t" style="left:991.74px;top:291.96px;font-size:9.5px;line-height:9.5px;color:#999999;font-weight:400;transform:scaleX(1.0726);transform-origin:0 0;">Операции с двоичными данными</div>
<svg style="position:absolute;left:1184px;top:280px;" width="16" height="10" viewBox="0 0 16 10"><path d="M0.8 1 L7.5 8.2 L14.8 1" fill="none" stroke="#c6c6c6" stroke-width="1.1"/></svg>
<div style="left:952px;top:323px;width:260px;height:57px;background:#fff;border-radius:4px"></div>
<div class="t" style="left:991.56px;top:333.44px;font-size:12px;line-height:12px;color:#000;font-weight:400;transform:scaleX(1.0220);transform-origin:0 0;">Таймеры и время</div>
<div class="t" style="left:991.74px;top:354.96px;font-size:9.5px;line-height:9.5px;color:#999999;font-weight:400;transform:scaleX(1.0578);transform-origin:0 0;">Таймеры и преобразования времени</div>
<svg style="position:absolute;left:1184px;top:343px;" width="16" height="10" viewBox="0 0 16 10"><path d="M0.8 1 L7.5 8.2 L14.8 1" fill="none" stroke="#c6c6c6" stroke-width="1.1"/></svg>
<div style="left:952px;top:386px;width:260px;height:57px;background:#fff;border-radius:4px"></div>
<div class="t" style="left:991.56px;top:396.44px;font-size:12px;line-height:12px;color:#000;font-weight:400;transform:scaleX(1.0230);transform-origin:0 0;">Логика</div>
<svg style="position:absolute;left:1184px;top:406px;" width="16" height="10" viewBox="0 0 16 10"><path d="M0.8 1 L7.5 8.2 L14.8 1" fill="none" stroke="#c6c6c6" stroke-width="1.1"/></svg>
<div style="left:952px;top:449px;width:260px;height:57px;background:#fff;border-radius:4px"></div>
<div class="t" style="left:991.56px;top:459.44px;font-size:12px;line-height:12px;color:#000;font-weight:400;transform:scaleX(1.0382);transform-origin:0 0;">Граф. блоки</div>
<svg style="position:absolute;left:1184px;top:469px;" width="16" height="10" viewBox="0 0 16 10"><path d="M0.8 1 L7.5 8.2 L14.8 1" fill="none" stroke="#c6c6c6" stroke-width="1.1"/></svg>
<div style="left:952px;top:512px;width:260px;height:57px;background:#fff;border-radius:4px"></div>
<div class="t" style="left:991.56px;top:522.44px;font-size:12px;line-height:12px;color:#000;font-weight:400;transform:scaleX(0.8856);transform-origin:0 0;">ПЗУ</div>
<div class="t" style="left:991.74px;top:543.96px;font-size:9.5px;line-height:9.5px;color:#999999;font-weight:400;transform:scaleX(1.1303);transform-origin:0 0;">Доступ к ПЗУ контроллера</div>
<svg style="position:absolute;left:1184px;top:532px;" width="16" height="10" viewBox="0 0 16 10"><path d="M0.8 1 L7.5 8.2 L14.8 1" fill="none" stroke="#c6c6c6" stroke-width="1.1"/></svg>
<div style="left:952px;top:575px;width:260px;height:57px;background:#fff;border-radius:4px"></div>
<div class="t" style="left:991.56px;top:585.44px;font-size:12px;line-height:12px;color:#000;font-weight:400;transform:scaleX(0.9859);transform-origin:0 0;">Modbus</div>
<div class="t" style="left:991.74px;top:606.96px;font-size:9.5px;line-height:9.5px;color:#999999;font-weight:400;transform:scaleX(1.0798);transform-origin:0 0;">Обмен данными по сети Modbus</div>
<svg style="position:absolute;left:1184px;top:595px;" width="16" height="10" viewBox="0 0 16 10"><path d="M0.8 1 L7.5 8.2 L14.8 1" fill="none" stroke="#c6c6c6" stroke-width="1.1"/></svg>
<div style="left:952px;top:638px;width:260px;height:57px;background:#fff;border-radius:4px"></div>
<div class="t" style="left:991.56px;top:648.44px;font-size:12px;line-height:12px;color:#000;font-weight:400;transform:scaleX(0.9694);transform-origin:0 0;">Макросы</div>
<div class="t" style="left:991.74px;top:669.96px;font-size:9.5px;line-height:9.5px;color:#999999;font-weight:400;transform:scaleX(1.1014);transform-origin:0 0;">Входы/выходы макроблоков</div>
<svg style="position:absolute;left:1184px;top:658px;" width="16" height="10" viewBox="0 0 16 10"><path d="M0.8 1 L7.5 8.2 L14.8 1" fill="none" stroke="#c6c6c6" stroke-width="1.1"/></svg>
<div style="left:952px;top:701px;width:260px;height:44px;background:#fff;border-radius:4px 4px 0 0"></div>
<div class="t" style="left:991.56px;top:711.44px;font-size:12px;line-height:12px;color:#000;font-weight:400;transform:scaleX(1.0132);transform-origin:0 0;">Управление</div>
<svg style="position:absolute;left:1184px;top:721px;" width="16" height="10" viewBox="0 0 16 10"><path d="M0.8 1 L7.5 8.2 L14.8 1" fill="none" stroke="#c6c6c6" stroke-width="1.1"/></svg>
<svg style="position:absolute;left:965px;top:152px;" width="15" height="15" viewBox="0 0 15 15"><rect x="0" y="0" width="7" height="7" fill="#000"/><rect x="3" y="3" width="1" height="1" fill="#fff"/><rect x="7" y="7" width="7" height="7" fill="#000"/><path d="M9 12 L12 9" stroke="#fff" stroke-width="0.9"/><path d="M9 3.5 H12 M10.5 2 V5 M2 10.5 H5" stroke="#000" stroke-width="1"/></svg>
<svg style="position:absolute;left:965px;top:215px;" width="14" height="14" viewBox="0 0 14 14"><rect width="14" height="14" fill="#000"/><path d="M2 6 L5.5 10.3 L8.5 2.5 H11" fill="none" stroke="#fff" stroke-width="1.1"/></svg>
<svg style="position:absolute;left:965px;top:278px;" width="14" height="14" viewBox="0 0 14 14"><path d="M0 0 H10 V2 H14 V14 H0 Z" fill="#000"/><rect x="4" y="2" width="6" height="4" fill="#fff"/><rect x="4" y="8" width="6" height="4" fill="#fff"/><rect x="12" y="6" width="2" height="2" fill="#fff"/></svg>
<svg style="position:absolute;left:967px;top:341px;" width="10" height="14" viewBox="0 0 10 14"><rect x="0" y="0" width="10" height="3" fill="#000"/><rect x="0" y="11" width="10" height="3" fill="#000"/><path d="M1.5 3 L5 7.5 L8.5 3" fill="none" stroke="#000" stroke-width="1.1"/><path d="M1 11 L3 8 H7 L9 11 Z" fill="#000"/><circle cx="5" cy="7.3" r="1" fill="#000"/></svg>
<svg style="position:absolute;left:965px;top:403px;" width="14" height="14" viewBox="0 0 14 14"><circle cx="7" cy="7.5" r="3" fill="#000"/><rect x="5.3" y="9" width="3.4" height="4" rx="1" fill="#000"/><rect x="6.3" y="1" width="1.5" height="1.5" fill="#777"/><rect x="1" y="6.8" width="1.6" height="1.6" fill="#777"/><rect x="11.4" y="6.8" width="1.6" height="1.6" fill="#777"/><circle cx="4.3" cy="2.8" r="0.8" fill="#000"/><circle cx="9.7" cy="2.8" r="0.8" fill="#000"/><circle cx="2.2" cy="4.8" r="0.8" fill="#000"/><circle cx="11.8" cy="4.8" r="0.8" fill="#000"/><circle cx="2.2" cy="10" r="0.8" fill="#000"/><circle cx="11.8" cy="10" r="0.8" fill="#000"/></svg>
<svg style="position:absolute;left:965px;top:466px;" width="14" height="14" viewBox="0 0 14 14"><circle cx="7" cy="7.5" r="3" fill="#000"/><rect x="5.3" y="9" width="3.4" height="4" rx="1" fill="#000"/><rect x="6.3" y="1" width="1.5" height="1.5" fill="#777"/><rect x="1" y="6.8" width="1.6" height="1.6" fill="#777"/><rect x="11.4" y="6.8" width="1.6" height="1.6" fill="#777"/><circle cx="4.3" cy="2.8" r="0.8" fill="#000"/><circle cx="9.7" cy="2.8" r="0.8" fill="#000"/><circle cx="2.2" cy="4.8" r="0.8" fill="#000"/><circle cx="11.8" cy="4.8" r="0.8" fill="#000"/><circle cx="2.2" cy="10" r="0.8" fill="#000"/><circle cx="11.8" cy="10" r="0.8" fill="#000"/></svg>
<svg style="position:absolute;left:965px;top:530px;" width="14" height="14" viewBox="0 0 14 14"><circle cx="7" cy="7" r="3" fill="#000"/><rect x="6.3" y="0" width="1.5" height="2.6" fill="#666"/><rect x="6.3" y="11.4" width="1.5" height="2.6" fill="#666"/><rect x="0" y="6.3" width="2.6" height="1.5" fill="#666"/><rect x="11.4" y="6.3" width="2.6" height="1.5" fill="#666"/><circle cx="4.3" cy="2.6" r="0.8" fill="#000"/><circle cx="9.7" cy="2.6" r="0.8" fill="#000"/><circle cx="2.6" cy="4.3" r="0.8" fill="#000"/><circle cx="11.4" cy="4.3" r="0.8" fill="#000"/><circle cx="2.6" cy="9.7" r="0.8" fill="#000"/><circle cx="11.4" cy="9.7" r="0.8" fill="#000"/><circle cx="4.3" cy="11.4" r="0.8" fill="#000"/><circle cx="9.7" cy="11.4" r="0.8" fill="#000"/></svg>
<svg style="position:absolute;left:965px;top:593px;" width="14" height="14" viewBox="0 0 14 14"><rect x="0" y="5" width="3.5" height="3.7" fill="#000"/><path d="M3 3 C3 1 4.5 0 6 0 H11 V14 H6 C4.5 14 3 13 3 11 Z" fill="#000"/><rect x="11" y="2" width="3" height="10" fill="#000"/><rect x="11" y="3" width="2" height="1.3" fill="#fff"/><rect x="11" y="5.5" width="2" height="1" fill="#aaa"/><rect x="11" y="7.5" width="2" height="1" fill="#aaa"/><rect x="11" y="9.5" width="2" height="1.3" fill="#fff"/></svg>
<svg style="position:absolute;left:965px;top:656px;" width="14" height="14" viewBox="0 0 14 14"><rect x="1" y="0" width="4" height="14" fill="#000"/><rect x="9" y="0" width="2" height="8" fill="#000"/><rect x="5" y="8" width="6" height="2" fill="#000"/><rect x="7" y="6" width="6" height="2" fill="#000"/></svg>
<svg style="position:absolute;left:964px;top:718px;" width="16" height="16" viewBox="0 0 16 16"><path d="M13.46 6.74 L15.44 7.08 L15.44 8.92 L13.46 9.26 L12.75 10.96 L13.91 12.62 L12.62 13.91 L10.96 12.75 L9.26 13.46 L8.92 15.44 L7.08 15.44 L6.74 13.46 L5.04 12.75 L3.38 13.91 L2.09 12.62 L3.25 10.96 L2.54 9.26 L0.56 8.92 L0.56 7.08 L2.54 6.74 L3.25 5.04 L2.09 3.38 L3.38 2.09 L5.04 3.25 L6.74 2.54 L7.08 0.56 L8.92 0.56 L9.26 2.54 L10.96 3.25 L12.62 2.09 L13.91 3.38 L12.75 5.04Z" fill="none" stroke="#111" stroke-width="1.2" stroke-linejoin="round"/><circle cx="8" cy="8" r="2.3" fill="none" stroke="#111" stroke-width="1.2"/></svg>
<div style="left:1229px;top:762px;width:2px;height:2px;background:#b8b8b8"></div>
<div style="left:1226px;top:765px;width:2px;height:2px;background:#b8b8b8"></div>
<div style="left:1229px;top:765px;width:2px;height:2px;background:#b8b8b8"></div>
<div style="left:1223px;top:768px;width:2px;height:2px;background:#b8b8b8"></div>
<div style="left:1226px;top:768px;width:2px;height:2px;background:#b8b8b8"></div>
<div style="left:1229px;top:768px;width:2px;height:2px;background:#b8b8b8"></div>
<div style="left:366px;top:222px;width:471px;height:415px;background:#e3e3e3;border:1px solid #5a5a5a;box-shadow:1px 4px 14px rgba(0,0,0,0.42)"></div>
<div style="left:367px;top:223px;width:469px;height:30px;background:#fff"></div>
<svg style="position:absolute;left:375px;top:230px;" width="15" height="13" viewBox="0 0 15 13"><rect x="0.5" y="0.5" width="14" height="12" fill="#eef2f2" stroke="#999" stroke-width="1"/><rect x="2" y="2" width="5" height="9" fill="#3a8f6a"/><rect x="2" y="2" width="5" height="4" fill="#2f6fae"/><rect x="9" y="2" width="4" height="9" fill="#dfe6ea"/><rect x="11" y="2" width="2" height="3" fill="#4aa06a"/></svg>
<div class="t" style="left:395.46px;top:232.24px;font-size:12px;line-height:12px;color:#000;font-weight:400;transform:scaleX(0.9732);transform-origin:0 0;">Редактор свойств Переменная1</div>
<svg style="position:absolute;left:763px;top:231px;" width="10" height="12" viewBox="0 0 10 12"><path d="M2.6 3.2 C2.8 1.2 8.2 0.6 8.2 3.6 C8.2 5.8 5.2 5.9 5.2 8.4" fill="none" stroke="#000" stroke-width="1.5"/><rect x="4.3" y="9.6" width="1.8" height="1.8" fill="#000"/></svg>
<svg style="position:absolute;left:807px;top:231px;" width="12" height="12" viewBox="0 0 12 12"><path d="M1 1 L11 11 M11 1 L1 11" stroke="#000" stroke-width="1.1"/></svg>
<svg style="position:absolute;left:377px;top:262px;" width="14" height="16" viewBox="0 0 14 16"><path d="M0 8 H14" stroke="#555" stroke-width="1.6"/><path d="M7 1.5 V6 M7 10 V14.5 M4.5 4 L7 1.5 L9.5 4 M4.5 12 L7 14.5 L9.5 12" fill="none" stroke="#222" stroke-width="1.1"/></svg>
<div style="left:398px;top:261px;width:395px;height:18px;background:#efefef;border:1px solid #cfcfcf;border-radius:3px"></div>
<div class="t" style="left:400.66px;top:264.94px;font-size:12px;line-height:12px;color:#999999;font-weight:400;transform:scaleX(1.0567);transform-origin:0 0;">Фильтр по имени</div>
<svg style="position:absolute;left:779px;top:263px;" width="12" height="12" viewBox="0 0 12 12"><circle cx="5" cy="5" r="4" fill="none" stroke="#cfcfcf" stroke-width="1.1"/><path d="M8 8 L11 11" stroke="#cfcfcf" stroke-width="1.1"/></svg>
<div style="left:796px;top:260px;width:33px;height:20px;background:#dcdcdc;border:1px solid #bdbdbd"></div>
<svg style="position:absolute;left:798px;top:262px;" width="17" height="17" viewBox="0 0 17 17"><g transform="scale(0.68)"><path d="M2.5 4.5 L5.5 7.5 L7.5 5.5 L4.5 2.5 C7.5 1 11 2.5 11.5 6 C11.7 7.5 11.3 8.5 11 9.3 L21.5 19.5 C22.5 20.5 22.5 21.5 21.5 22.5 C20.5 23.5 19.5 23.5 18.5 22.5 L8.5 12.3 C7.5 12.7 6.5 12.8 5.5 12.5 C2.5 11.5 1.2 8 2.5 4.5 Z" fill="none" stroke="#111" stroke-width="1.8" stroke-linejoin="round"/></g></svg>
<div style="left:816px;top:262px;width:1px;height:16px;background:#888"></div>
<svg style="position:absolute;left:820px;top:269px;" width="7" height="5" viewBox="0 0 7 5"><path d="M0 0 H7 L3.5 4.5 Z" fill="#000"/></svg>
<div style="left:373px;top:281px;width:457px;height:320px;background:#fff;border:1px solid #7e8590"></div>
<div style="left:374px;top:300px;width:455px;height:1px;background:#e2e2e2"></div>
<div class="t" style="left:386.86px;top:286.24px;font-size:12px;line-height:12px;color:#888;font-weight:400;transform:scaleX(0.9810);transform-origin:0 0;">Тип объекта</div>
<div class="t" style="left:516.46px;top:286.24px;font-size:12px;line-height:12px;color:#888;font-weight:400;transform:scaleX(0.9574);transform-origin:0 0;">Переменная FBD</div>
<div style="left:384px;top:301px;width:445px;height:18px;background:#0078d7"></div>
<div style="left:374px;top:319px;width:455px;height:1px;background:#e2e2e2"></div>
<div class="t" style="left:386.86px;top:305.24px;font-size:12px;line-height:12px;color:#fff;font-weight:400;transform:scaleX(0.9697);transform-origin:0 0;">Название</div>
<div class="t" style="left:516.46px;top:305.24px;font-size:12px;line-height:12px;color:#fff;font-weight:400;transform:scaleX(0.9236);transform-origin:0 0;">Var2</div>
<div style="left:374px;top:338px;width:455px;height:1px;background:#e2e2e2"></div>
<div class="t" style="left:386.86px;top:324.24px;font-size:12px;line-height:12px;color:#000;font-weight:400;transform:scaleX(0.9830);transform-origin:0 0;">Тип данных</div>
<div class="t" style="left:516.46px;top:324.24px;font-size:12px;line-height:12px;color:#000;font-weight:400;transform:scaleX(0.9897);transform-origin:0 0;">Беззнак.целый 1-байт</div>
<div style="left:384px;top:339px;width:445px;height:18px;background:#f5f5f5"></div>
<div style="left:374px;top:357px;width:455px;height:1px;background:#e2e2e2"></div>
<div class="t" style="left:386.86px;top:343.24px;font-size:12px;line-height:12px;color:#888;font-weight:400;transform:scaleX(1.0207);transform-origin:0 0;">fbdvar.localid</div>
<div style="left:374px;top:376px;width:455px;height:1px;background:#e2e2e2"></div>
<div class="t" style="left:386.86px;top:362.24px;font-size:12px;line-height:12px;color:#000;font-weight:400;transform:scaleX(0.9953);transform-origin:0 0;">Начальное значение</div>
<div class="t" style="left:516.46px;top:362.24px;font-size:12px;line-height:12px;color:#000;font-weight:400;transform:scaleX(1.0467);transform-origin:0 0;">0</div>
<div style="left:384px;top:377px;width:445px;height:18px;background:#f5f5f5"></div>
<div style="left:374px;top:395px;width:455px;height:1px;background:#e2e2e2"></div>
<div class="t" style="left:386.86px;top:381.24px;font-size:12px;line-height:12px;color:#000;font-weight:400;transform:scaleX(0.9737);transform-origin:0 0;">Константа</div>
<div style="left:374px;top:414px;width:455px;height:1px;background:#e2e2e2"></div>
<div class="t" style="left:386.86px;top:400.24px;font-size:12px;line-height:12px;color:#000;font-weight:400;transform:scaleX(0.9831);transform-origin:0 0;">Запись в ПЗУ</div>
<div style="left:384px;top:415px;width:445px;height:18px;background:#f5f5f5"></div>
<div style="left:374px;top:433px;width:455px;height:1px;background:#e2e2e2"></div>
<div class="t" style="left:386.86px;top:419.24px;font-size:12px;line-height:12px;color:#000;font-weight:400;transform:scaleX(0.9688);transform-origin:0 0;">Сетевой доступ</div>
<div class="t" style="left:516.46px;top:419.24px;font-size:12px;line-height:12px;color:#000;font-weight:400;transform:scaleX(0.9541);transform-origin:0 0;">Нет</div>
<div style="left:374px;top:452px;width:455px;height:1px;background:#e2e2e2"></div>
<div class="t" style="left:386.86px;top:438.24px;font-size:12px;line-height:12px;color:#000;font-weight:400;transform:scaleX(0.9960);transform-origin:0 0;">Описание</div>
<div style="left:513px;top:282px;width:1px;height:171px;background:#e2e2e2"></div>
<div style="left:517px;top:380px;width:13px;height:13px;background:#fff;border:1px solid #333"></div>
<div style="left:517px;top:399px;width:13px;height:13px;background:#fff;border:1px solid #333"></div>
<div style="left:756px;top:608px;width:73px;height:21px;background:#e1e1e1;border:2px solid #0078d7"></div>
<div class="t" style="left:784.03px;top:614.29px;font-size:11px;line-height:11px;color:#000;font-weight:400;transform:scaleX(0.9430);transform-origin:0 0;">OK</div>
<div style="left:747px;top:599px;width:91px;height:43px;border:3px solid #e3392f;border-radius:6px"></div>
</body></html>
